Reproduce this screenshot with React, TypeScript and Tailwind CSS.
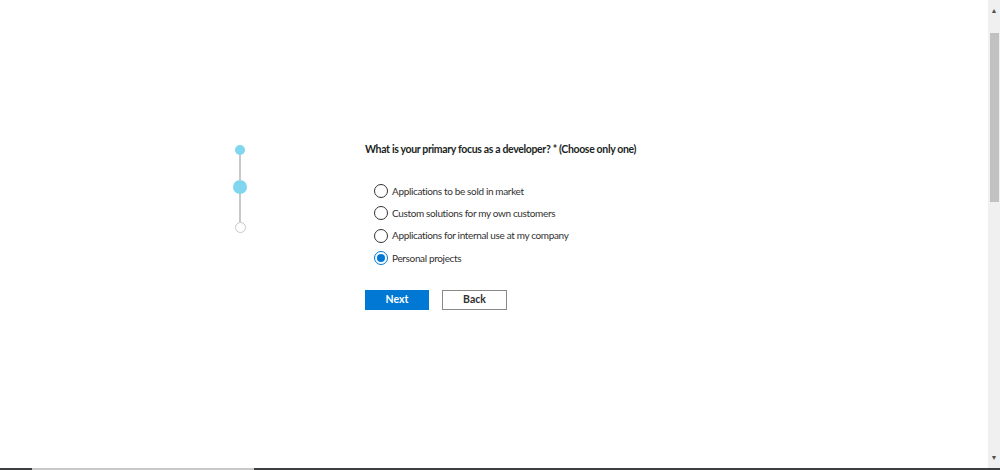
import { useState } from 'react'

const options = [
  'Applications to be sold in market',
  'Custom solutions for my own customers',
  'Applications for internal use at my company',
  'Personal projects',
]

function Stepper() {
  return (
    <div className="flex w-[14px] flex-col items-center pt-[145px]">
      <div className="h-[10px] w-[10px] rounded-full bg-[#7fd6ee]" />
      <div className="h-[25px] w-[2px] bg-[#c8c8c8]" />
      <div className="h-[14px] w-[14px] rounded-full bg-[#7fd6ee]" />
      <div className="h-[28px] w-[2px] bg-[#c8c8c8]" />
      <div className="h-[11px] w-[11px] rounded-full border border-[#c8c8c8] bg-white" />
    </div>
  )
}

function Radio({ label, checked, onSelect }: { label: string; checked: boolean; onSelect: () => void }) {
  return (
    <button type="button" onClick={onSelect} className="flex h-[22.3px] items-center gap-[4px] pl-[9px] text-left">
      <span
        className={
          checked
            ? 'flex h-[14px] w-[14px] items-center justify-center rounded-full border border-[#0078d4]'
            : 'flex h-[14px] w-[14px] items-center justify-center rounded-full border border-[#333333]'
        }
      >
        {checked && <span className="h-[8px] w-[8px] rounded-full bg-[#0078d4]" />}
      </span>
      <span className="text-[10px] tracking-[-0.35px] text-[#323130]">{label}</span>
    </button>
  )
}

export default function App() {
  const [choice, setChoice] = useState(3)

  return (
    <div className="flex h-[470px] w-[1000px] flex-col overflow-hidden bg-white font-['Segoe_UI','Lato',sans-serif]">
      <div className="flex min-h-0 flex-1">
        <main className="flex flex-1 pl-[233px]">
          <Stepper />
          <section className="ml-[118px] pt-[140px]">
            <h1 className="text-[10.5px] leading-[18px] font-bold tracking-[-0.34px] text-[#201f1e]">
              What is your primary focus as a developer? * (Choose only one)
            </h1>
            <div className="mt-[22px] flex flex-col">
              {options.map((opt, i) => (
                <Radio key={opt} label={opt} checked={choice === i} onSelect={() => setChoice(i)} />
              ))}
            </div>
            <div className="mt-[21px] flex gap-[13px]">
              <button type="button" className="h-[20px] w-[64px] bg-[#0078d4] text-[10.5px] font-bold text-white">
                Next
              </button>
              <button type="button" className="h-[20px] w-[65px] border border-[#8a8886] bg-white text-[10.5px] font-bold text-[#323130]">
                Back
              </button>
            </div>
          </section>
        </main>
        <div className="flex w-[12px] flex-col items-center bg-[#f0f0f0]">
          <div className="flex h-[14px] items-end justify-center text-[7px] leading-none text-[#505050]">▲</div>
          <div className="mt-[19px] h-[169px] w-[9px] bg-[#c1c1c1]" />
          <div className="flex-1" />
          <div className="flex h-[14px] items-start justify-center text-[7px] leading-none text-[#505050]">▼</div>
        </div>
      </div>
      <div className="flex h-[2px]">
        <div className="w-[32px] bg-[#3c4043]" />
        <div className="w-[222px] bg-[#c8c8c8]" />
        <div className="flex-1 bg-[#3c4043]" />
      </div>
    </div>
  )
}
